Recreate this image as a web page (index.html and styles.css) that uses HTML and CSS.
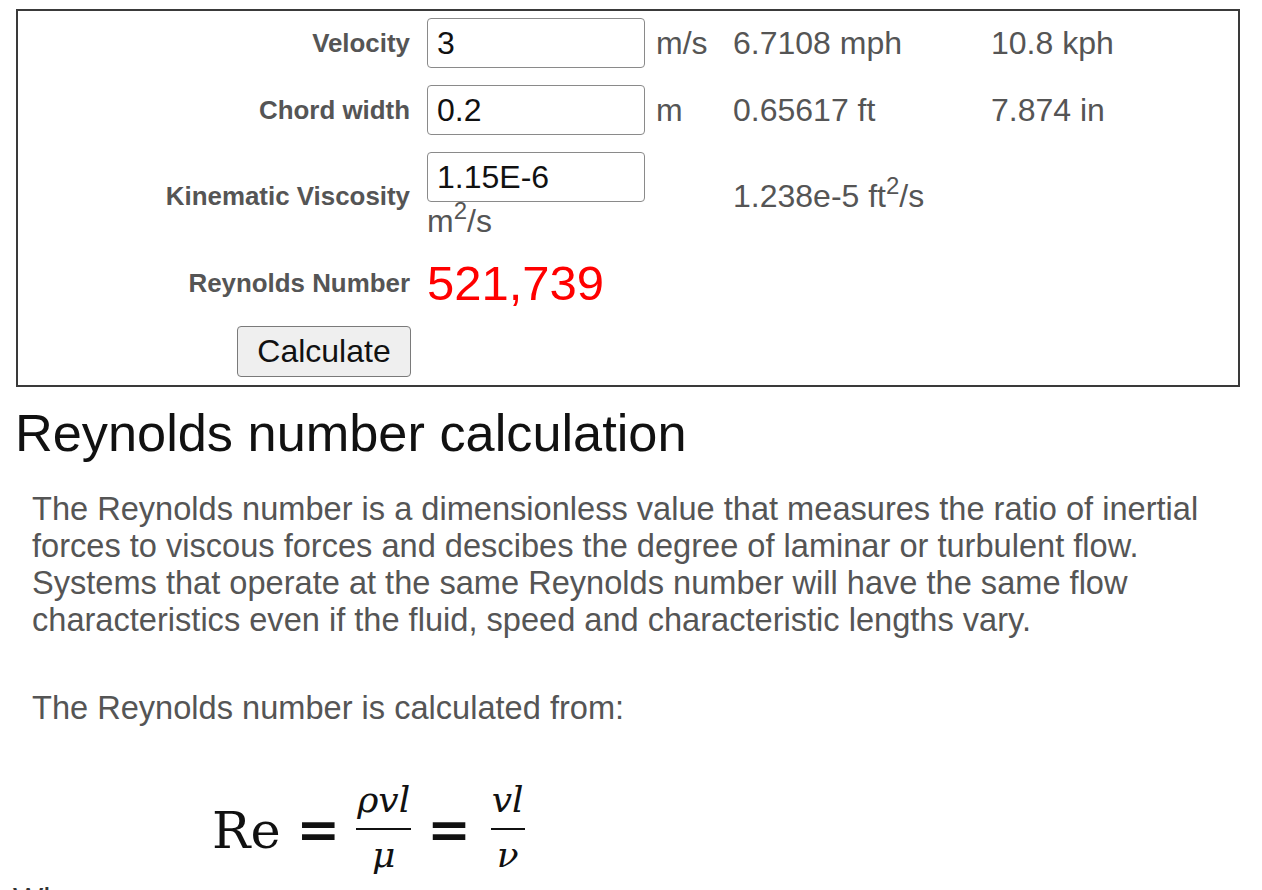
FILE: index.html
```html
<!DOCTYPE html>
<html lang="en">
<head>
<meta charset="utf-8">
<title>Reynolds number calculation</title>
<link rel="stylesheet" href="styles.css">
</head>
<body>
<form class="calc">
  <label class="lbl" for="vel">Velocity</label>
  <div class="cell"><input class="field" id="vel" type="text" value="3"></div>
  <div class="unit">m/s</div>
  <div class="conv">6.7108 mph</div>
  <div class="conv">10.8 kph</div>

  <label class="lbl" for="chord">Chord width</label>
  <div class="cell"><input class="field" id="chord" type="text" value="0.2"></div>
  <div class="unit">m</div>
  <div class="conv">0.65617 ft</div>
  <div class="conv">7.874 in</div>

  <label class="lbl" for="visc">Kinematic Viscosity</label>
  <div class="cell cell-stack"><input class="field" id="visc" type="text" value="1.15E-6"><span class="unit-below">m<sup>2</sup>/s</span></div>
  <div class="unit"></div>
  <div class="conv">1.238e-5 ft<sup>2</sup>/s</div>
  <div class="conv"></div>

  <div class="lbl">Reynolds Number</div>
  <div class="result">521,739</div>

  <div class="btn-cell"><button class="btn" type="button">Calculate</button></div>
</form>

<h1 class="title">Reynolds number calculation</h1>

<p class="text">The Reynolds number is a dimensionless value that measures the ratio of inertial forces to viscous forces and descibes the degree of laminar or turbulent flow. Systems that operate at the same Reynolds number will have the same flow characteristics even if the fluid, speed and characteristic lengths vary.</p>

<p class="text text-second">The Reynolds number is calculated from:</p>

<div class="formula">
  <span class="re">Re</span>
  <span class="eq">=</span>
  <span class="frac frac-wide"><span class="num"><i>ρvl</i></span><span class="den"><i>μ</i></span></span>
  <span class="eq eq-last">=</span>
  <span class="frac"><span class="num"><i>vl</i></span><span class="den"><i>ν</i></span></span>
</div>

<p class="where">Where:</p>
</body>
</html>
```

FILE: styles.css
```css
html, body {
  margin: 0;
  padding: 0;
  background: #ffffff;
}

body {
  font-family: "Liberation Sans", Arial, Helvetica, sans-serif;
  color: #555555;
  font-size: 32px;
}

.calc {
  margin: 9px 22px 0 16px;
  border: 2px solid #3a3a3a;
  padding: 7px 0 8px 0;
  display: grid;
  grid-template-columns: 409px 218px 88px 258px 1fr;
  grid-template-rows: 50px 50px auto 52px 51px;
  row-gap: 17px;
}

.lbl {
  grid-column: 1;
  align-self: center;
  justify-self: end;
  padding-right: 17px;
  font-weight: bold;
  font-size: 25.9px;
  color: #555555;
}

.cell {
  grid-column: 2;
  display: flex;
  align-items: center;
}

.cell-stack {
  flex-direction: column;
  align-items: flex-start;
}

.field {
  box-sizing: border-box;
  width: 218px;
  height: 50px;
  margin: 0;
  padding: 0 9px;
  border: 1px solid #8a8a8a;
  border-radius: 4px;
  font-family: "Liberation Sans", Arial, sans-serif;
  font-size: 32px;
  color: #111111;
  background: #ffffff;
}

.unit-below {
  display: block;
  line-height: 38px;
  color: #555555;
}

.unit {
  align-self: center;
  padding-left: 11px;
  color: #555555;
}

.conv {
  align-self: center;
  color: #555555;
}

sup {
  font-size: 0.75em;
  line-height: 0;
  vertical-align: 0.55em;
}

.result {
  grid-column: 2 / 6;
  align-self: center;
  font-size: 49px;
  line-height: 52px;
  color: #ff0000;
}

.btn-cell {
  grid-column: 1;
  display: flex;
  justify-content: flex-end;
  padding-right: 16px;
}

.btn {
  box-sizing: border-box;
  width: 174px;
  height: 51px;
  margin: 0;
  padding: 0;
  border: 1px solid #7a7a7a;
  border-radius: 4px;
  background: #efefef;
  font-family: "Liberation Sans", Arial, sans-serif;
  font-size: 32px;
  color: #111111;
}

.title {
  margin: 16px 0 0 15px;
  font-size: 52.3px;
  font-weight: normal;
  line-height: normal;
  color: #111111;
}

.text {
  margin: 27px 22px 0 32px;
  font-size: 32.6px;
  line-height: 37px;
  color: #555555;
}

.text-second {
  margin-top: 51px;
}

.formula {
  display: flex;
  align-items: center;
  margin: 53px 0 0 212px;
  font-family: "DejaVu Serif", "Liberation Serif", serif;
  color: #111111;
}

.re {
  font-size: 51px;
  line-height: 1;
  padding-top: 6px;
}

.eq {
  font-size: 52px;
  line-height: 1;
  font-weight: bold;
  padding-top: 4px;
  margin: 0 16px 0 16px;
}

.eq-last {
  margin: 0 20px 0 16px;
}

.frac {
  display: inline-flex;
  flex-direction: column;
  align-items: stretch;
  text-align: center;
}

.num, .den {
  font-size: 36px;
  line-height: 42px;
  padding: 0 1px;
}

.num {
  padding-bottom: 7px;
  border-bottom: 2px solid #111111;
}

.den {
  padding-top: 4px;
}

.frac i {
  font-style: italic;
}

.where {
  margin: 5px 0 0 13px;
  font-size: 32px;
  color: #333333;
}
```
